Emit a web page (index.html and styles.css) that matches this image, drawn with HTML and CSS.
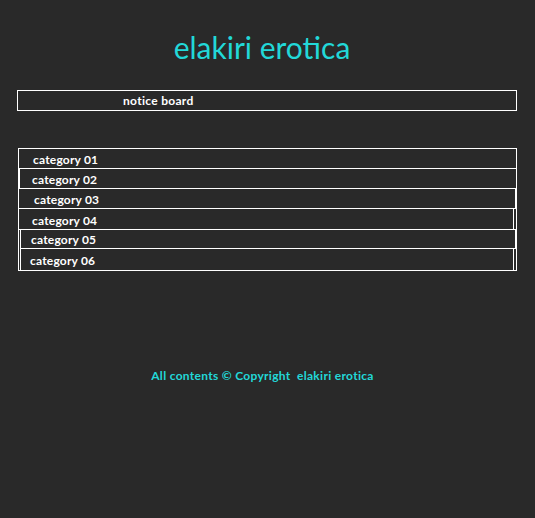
FILE: index.html
```html
<!DOCTYPE html>
<html>
<head>
<meta charset="utf-8">
<title>elakiri erotica</title>
<link rel="stylesheet" href="styles.css">
</head>
<body>
<div class="page">
  <h1 class="title">elakiri erotica</h1>
  <div class="notice">notice board</div>
  <div class="cats">
    <div class="row r1">category 01</div>
    <div class="row r2">category 02</div>
    <div class="row r3">category 03</div>
    <div class="row r4">category 04</div>
    <div class="row r5">category 05</div>
    <div class="row r6">category 06</div>
  </div>
  <p class="footer">All contents © Copyright&nbsp; elakiri erotica</p>
</div>
</body>
</html>
```
FILE: styles.css
```css
html, body {
  margin: 0;
  padding: 0;
  background: #292929;
}
body {
  font-family: "Lato", "Open Sans", sans-serif;
  color: #ffffff;
}
.page {
  width: 535px;
  padding-top: 30px;
}
.title {
  margin: 0;
  height: 60px;
  font-size: 30px;
  font-weight: 400;
  line-height: 34px;
  color: #22d8d8;
  text-align: center;
  padding-right: 11px;
  box-sizing: border-box;
}
.notice {
  margin-left: 17px;
  width: 500px;
  height: 21px;
  box-sizing: border-box;
  border: 1px solid #ffffff;
  padding-left: 105px;
  font-size: 12px;
  font-weight: 700;
  line-height: 19px;
  letter-spacing: 0.3px;
}
.cats {
  margin-top: 37px;
  margin-left: 18px;
  width: 499px;
  box-sizing: border-box;
  border: 1px solid #ffffff;
}
.row {
  border: 1px solid #ffffff;
  box-sizing: border-box;
  height: 21px;
  margin-top: -1px;
  padding-top: 3px;
  font-size: 12px;
  font-weight: 700;
  line-height: 16px;
  letter-spacing: 0.2px;
}
.r1 { margin-left: -1px; margin-right: -1px; padding-left: 14px; }
.r2 { margin-left: 0; margin-right: -1px; padding-left: 12px; }
.r3 { margin-left: -1px; margin-right: 0; padding-left: 15px; }
.r4 { margin-left: -1px; margin-right: 2px; padding-left: 13px; height: 22px; line-height: 17px; }
.r5 { margin-left: 1px; margin-right: 0; padding-left: 10px; height: 20px; padding-top: 2px; line-height: 16px; }
.r6 { margin-left: 1px; margin-right: 2px; padding-left: 9px; height: 23px; padding-top: 2px; line-height: 19px; margin-bottom: -1px; }
.footer {
  margin: 98px 0 0 0;
  text-align: center;
  padding-right: 10px;
  font-size: 12px;
  font-weight: 700;
  line-height: 14px;
  letter-spacing: 0.3px;
  color: #22d8d8;
}
```
